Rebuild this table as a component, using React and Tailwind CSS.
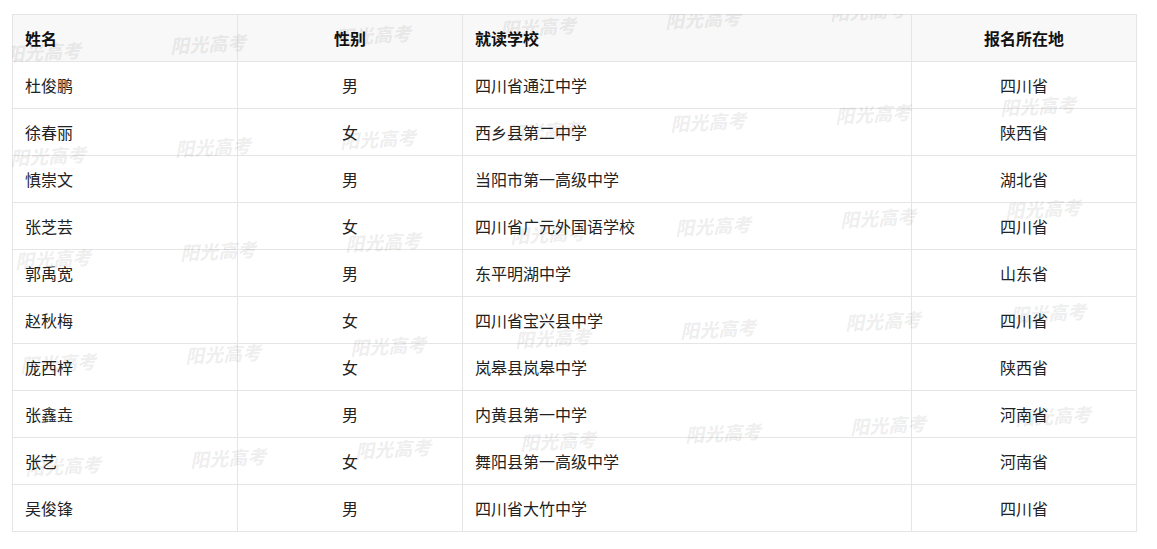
const ROWS = [
  ['杜俊鹏', '男', '四川省通江中学', '四川省'],
  ['徐春丽', '女', '西乡县第二中学', '陕西省'],
  ['慎崇文', '男', '当阳市第一高级中学', '湖北省'],
  ['张芝芸', '女', '四川省广元外国语学校', '四川省'],
  ['郭禹宽', '男', '东平明湖中学', '山东省'],
  ['赵秋梅', '女', '四川省宝兴县中学', '四川省'],
  ['庞西梓', '女', '岚皋县岚皋中学', '陕西省'],
  ['张鑫垚', '男', '内黄县第一中学', '河南省'],
  ['张艺', '女', '舞阳县第一高级中学', '河南省'],
  ['吴俊锋', '男', '四川省大竹中学', '四川省'],
];

// watermark grid: 5 rows x 7 cols, positions relative to the table box
const MARKS = [];
for (let r = 0; r < 5; r++) {
  for (let c = 0; c < 7; c++) {
    MARKS.push({ x: 43 + 165 * c + 5 * r - 12, y: 51 - 8.3 * c + 103.5 * r - 14 });
  }
}

export default function App() {
  return (
    <div className="min-h-screen bg-white pt-[14px] pl-3" style={{ fontFamily: '"Noto Sans CJK SC", "Noto Sans", sans-serif' }}>
      <div className="relative w-[1125px]">
        <table className="w-full table-fixed border-collapse border border-[#e5e5e5] text-[16px] text-[#222]">
          <colgroup>
            <col className="w-[225px]" />
            <col className="w-[225px]" />
            <col className="w-[449px]" />
            <col className="w-[225px]" />
          </colgroup>
          <thead>
            <tr className="h-[47px] bg-[#f8f8f8] text-[#111]">
              <th className="border border-[#e5e5e5] px-3 text-left font-bold">姓名</th>
              <th className="border border-[#e5e5e5] px-3 text-center font-bold">性别</th>
              <th className="border border-[#e5e5e5] px-3 text-left font-bold">就读学校</th>
              <th className="border border-[#e5e5e5] px-3 text-center font-bold">报名所在地</th>
            </tr>
          </thead>
          <tbody>
            {ROWS.map((row, i) => (
              <tr key={i} className="h-[47px]">
                <td className="border border-[#e5e5e5] px-3 text-left">{row[0]}</td>
                <td className="border border-[#e5e5e5] px-3 text-center">{row[1]}</td>
                <td className="border border-[#e5e5e5] px-3 text-left">{row[2]}</td>
                <td className="border border-[#e5e5e5] px-3 text-center">{row[3]}</td>
              </tr>
            ))}
          </tbody>
        </table>

        {/* 阳光高考 watermark overlay */}
        <div className="pointer-events-none absolute inset-0 overflow-hidden">
          {MARKS.map((m, i) => (
            <span
              key={i}
              className="absolute -translate-x-1/2 -translate-y-1/2 -rotate-3 whitespace-nowrap text-[19px] font-black italic leading-none text-black/[0.07]"
              style={{ left: m.x, top: m.y, fontFamily: '"Noto Sans CJK SC", serif' }}
            >
              阳光高考
            </span>
          ))}
        </div>
      </div>
    </div>
  );
}
